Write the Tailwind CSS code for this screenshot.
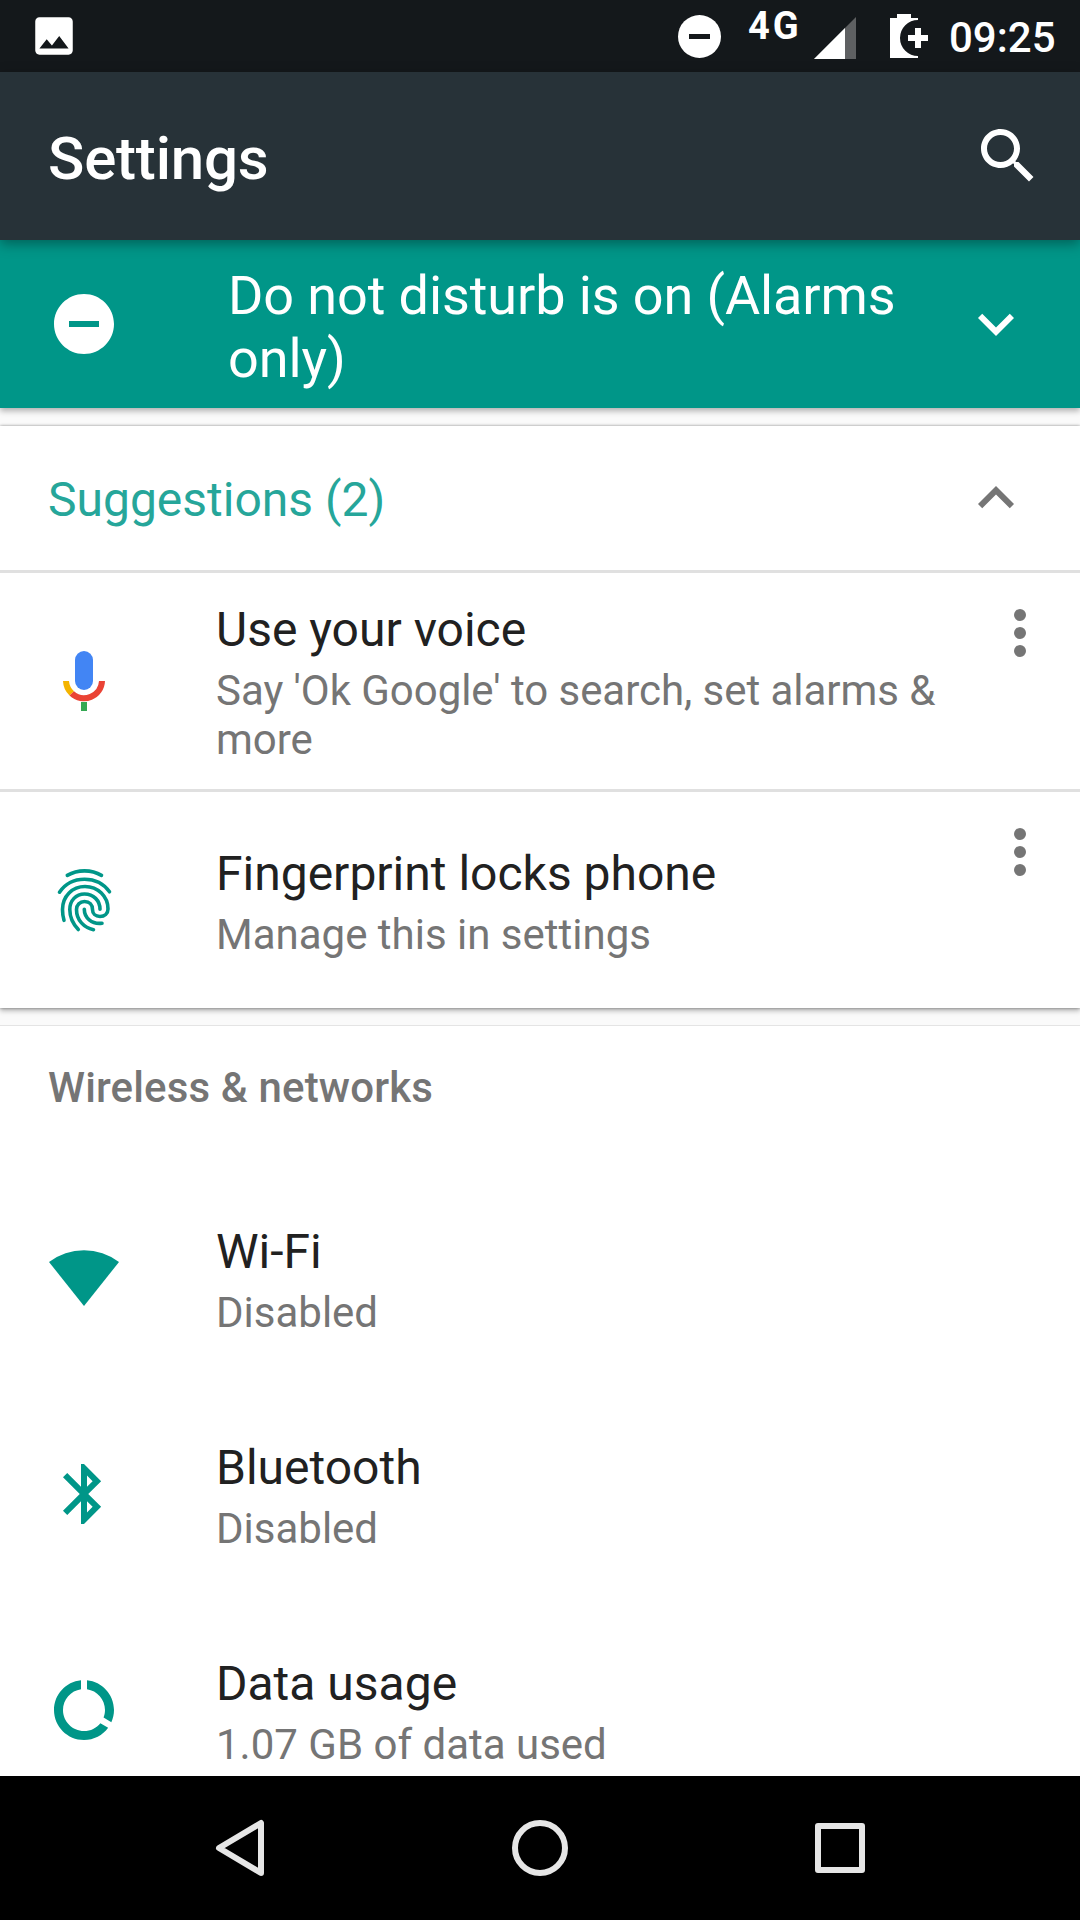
<!DOCTYPE html>
<html lang="en">
<head>
<meta charset="utf-8">
<title>Settings</title>
<script src="https://cdn.jsdelivr.net/npm/@tailwindcss/browser@4"></script>
</head>
<body class="w-[1080px] h-[1920px] overflow-hidden flex flex-col bg-[#fafafa] font-['Roboto',sans-serif]">
  <!-- Status bar -->
  <header class="h-[72px] shrink-0 bg-[#14181b] flex items-center text-white">
    <svg class="ml-[29px] w-[50px] h-[50px]" viewBox="0 0 24 24" fill="#fff"><path d="M21 19V5c0-1.1-.9-2-2-2H5c-1.1 0-2 .9-2 2v14c0 1.100.9 2 2 2h14c1.100 0 2-.9 2-2zM8.500 13.500l2.500 3.010L14.500 12l4.500 6H5l3.500-4.500z"/></svg>
    <svg class="ml-[599px] w-[43px] h-[43px] shrink-0" viewBox="0 0 43 43"><circle cx="21.500" cy="21.500" r="21.500" fill="#fff"/><rect x="11" y="19" width="21" height="5" fill="#14181b"/></svg>
    <span class="ml-[27px] w-[52px] h-[72px] pt-[4px] text-[38px] leading-[44px] font-bold tracking-[3px]">4G</span>
    <svg class="ml-[14px] w-[42px] h-[42px] mt-[4px] shrink-0" viewBox="0 0 42 42"><path d="M42 0V42H0z" fill="#5e6062"/><path d="M31 11V42H0z" fill="#fff"/></svg>
    <svg class="ml-[34px] w-[38px] h-[44px] shrink-0" viewBox="0 0 38 44" fill="#fff"><path d="M0 4H7V0H21V4H28V6A18 18 0 0 0 28 42V44H0z"/><path d="M25 14h6v7h7v6h-7v7h-6v-7h-7v-6h7z"/></svg>
    <span class="ml-[21px] pt-[2px] text-[42px] leading-[49px] font-medium">09:25</span>
  </header>
  <!-- App bar -->
  <div class="relative z-10 h-[168px] shrink-0 bg-[#273238] flex items-center justify-between pl-[48px] pr-[36px] shadow-[0_4px_12px_rgba(0,0,0,0.35)]">
    <h1 class="pt-[6px] text-white text-[60px] leading-[70px] font-medium tracking-[-0.2px]">Settings</h1>
    <svg class="w-[72px] h-[72px]" viewBox="0 0 24 24" fill="#fff"><path d="M15.500 14h-.79l-.28-.27C15.410 12.590 16 11.110 16 9.500 16 5.910 13.090 3 9.500 3S3 5.910 3 9.500 5.910 16 9.500 16c1.610 0 3.090-.59 4.230-1.570l.27.280v.79l5 4.990L20.490 19l-4.990-5zm-6 0C7.010 14 5 11.990 5 9.500S7.010 5 9.500 5 14 7.010 14 9.500 11.990 14 9.500 14z"/></svg>
  </div>
  <!-- Do not disturb -->
  <section class="relative h-[168px] shrink-0 bg-[#009688] flex items-center pl-[48px] pr-[48px] shadow-[0_3px_6px_rgba(0,0,0,0.3)]">
    <svg class="w-[72px] h-[72px] shrink-0" viewBox="0 0 24 24" fill="#fff"><path d="M12 2C6.480 2 2 6.480 2 12s4.480 10 10 10 10-4.480 10-10S17.520 2 12 2zm5 11H7v-2h10v2z"/></svg>
    <p class="ml-[108px] pt-[6px] w-[700px] text-white text-[54px] leading-[63px] tracking-[-0.1px]">Do not disturb is on (Alarms only)</p>
    <svg class="ml-auto w-[72px] h-[72px] shrink-0" viewBox="0 0 24 24" fill="#fff"><path d="M16.590 8.590L12 13.170 7.410 8.590 6 10l6 6 6-6z"/></svg>
  </section>
  <!-- Suggestions -->
  <section class="mt-[18px] shrink-0 bg-white shadow-[0_3px_5px_rgba(0,0,0,0.25),0_0_3px_rgba(0,0,0,0.4)]">
    <div class="h-[147px] border-b-[3px] border-[#e0e0e0] flex items-center justify-between px-[48px]">
      <h2 class="pt-[4px] text-[#26a69a] text-[48px] leading-[56px]">Suggestions (2)</h2>
      <svg class="w-[72px] h-[72px]" viewBox="0 0 24 24" fill="#757575"><path d="M12 8l-6 6 1.410 1.410L12 10.830l4.590 4.580L18 14z"/></svg>
    </div>
    <div class="h-[219px] border-b-[3px] border-[#e0e0e0] flex items-center pl-[48px] pr-[48px]">
      <svg class="w-[72px] h-[72px] shrink-0" viewBox="0 0 72 72"><rect x="27" y="6" width="18" height="39" rx="9" fill="#4285f4"/><path d="M15 36a21 21 0 0 0 6.500 14.500L26 46.200A15 15 0 0 1 21 36z" fill="#f4b400"/><path d="M21.500 50.500A21 21 0 0 0 57 36H51A15 15 0 0 1 26 46.200z" fill="#ea4335"/><path d="M33 57h6v9h-6z" fill="#34a853"/></svg>
      <div class="ml-[96px] w-[740px]">
        <h3 class="mb-1 text-[#212121] text-[48px] leading-[64px]">Use your voice</h3>
        <p class="text-[#757575] text-[42px] leading-[49px] tracking-[-0.05px]">Say 'Ok Google' to search, set alarms &amp; more</p>
      </div>
      <svg class="ml-auto mr-[6px] self-start mt-[36px] w-[12px] h-[48px]" viewBox="0 0 12 48" fill="#757575"><circle cx="6" cy="6" r="6"/><circle cx="6" cy="24" r="6"/><circle cx="6" cy="42" r="6"/></svg>
    </div>
    <div class="h-[216px] flex items-center pl-[48px] pr-[48px]">
      <svg class="w-[72px] h-[72px] shrink-0" viewBox="0 0 72 72" fill="none" stroke="#009688" stroke-width="3.600" stroke-linecap="round"><path d="M19.300 11.400Q27 6.900 36.500 6.900T53.500 11.400"/><path d="M11.500 28.200C17 20 26 15.200 36.500 15.200S56 20 61.500 27.800"/><path d="M16 56.300C15 53 14.500 49 14.500 45.500C14.500 32 24.500 22.500 37 22.500C50 22.500 60 32.500 60 45C60 49.500 56.500 52.500 52 52.500C47.500 52.500 44.500 49.500 44.500 45.500C44.500 41 41.500 37.500 36.500 37.500C32 37.500 28.500 41 28.500 45.500C28.500 56.500 36 63.500 45.500 65.700"/><path d="M30.300 65.500C24.500 59.500 21.800 53.500 21.800 45.500C21.800 36.500 28 30 36.500 30C45.500 30 52 36.500 52 45.300"/><path d="M36.300 45.200C36.300 53.500 43.500 60.500 54 59.200"/></svg>
      <div class="ml-[96px] w-[740px]">
        <h3 class="mb-1 text-[#212121] text-[48px] leading-[64px]">Fingerprint locks phone</h3>
        <p class="text-[#757575] text-[42px] leading-[49px]">Manage this in settings</p>
      </div>
      <svg class="ml-auto mr-[6px] self-start mt-[36px] w-[12px] h-[48px]" viewBox="0 0 12 48" fill="#757575"><circle cx="6" cy="6" r="6"/><circle cx="6" cy="24" r="6"/><circle cx="6" cy="42" r="6"/></svg>
    </div>
  </section>
  <!-- Wireless & networks -->
  <main class="mt-[17px] border-t border-[#e4e4e4] grow overflow-hidden bg-white">
    <h2 class="pt-[37px] pl-[48px] h-[144px] text-[#757575] text-[42px] leading-[49px] font-medium tracking-[0.15px]">Wireless &amp; networks</h2>
    <div class="h-[216px] flex items-center pl-[48px]">
      <svg class="w-[72px] h-[72px] shrink-0" viewBox="0 0 72 72" fill="#009688"><path d="M36 64L1 20A58 58 0 0 1 71 20z"/></svg>
      <div class="ml-[96px]"><h3 class="mb-1 text-[#212121] text-[48px] leading-[64px]">Wi-Fi</h3><p class="text-[#757575] text-[42px] leading-[49px]">Disabled</p></div>
    </div>
    <div class="h-[216px] flex items-center pl-[48px]">
      <svg class="w-[72px] h-[72px] shrink-0" viewBox="0 0 24 24" fill="#009688"><path d="M17.710 7.710L12 2h-1v7.590L6.410 5 5 6.410 10.590 12 5 17.590 6.410 19 11 14.410V22h1l5.710-5.710-4.300-4.290 4.300-4.290zM13 5.830l1.880 1.880L13 9.590V5.830zm1.880 10.460L13 18.170v-3.760l1.880 1.880z"/></svg>
      <div class="ml-[96px]"><h3 class="mb-1 text-[#212121] text-[48px] leading-[64px]">Bluetooth</h3><p class="text-[#757575] text-[42px] leading-[49px]">Disabled</p></div>
    </div>
    <div class="h-[216px] flex items-center pl-[48px]">
      <svg class="w-[72px] h-[72px] shrink-0" viewBox="0 0 24 24" fill="#009688"><path d="M13 2.050v3.030c3.390.49 6 3.390 6 6.920 0 .9-.18 1.750-.48 2.540l2.600 1.530c.56-1.240.88-2.620.88-4.070 0-5.180-3.950-9.450-9-9.950zM12 19c-3.870 0-7-3.130-7-7 0-3.530 2.610-6.430 6-6.920V2.050c-5.060.5-9 4.760-9 9.950 0 5.520 4.470 10 9.990 10 3.310 0 6.240-1.610 8.060-4.090l-2.600-1.530C16.170 17.980 14.210 19 12 19z"/></svg>
      <div class="ml-[96px]"><h3 class="mb-1 text-[#212121] text-[48px] leading-[64px]">Data usage</h3><p class="text-[#757575] text-[42px] leading-[49px]">1.07 GB of data used</p></div>
    </div>
  </main>
  <!-- Navigation bar -->
  <nav class="h-[144px] shrink-0 bg-black grid grid-cols-[240px_240px_120px_240px_240px] items-center">
    <svg class="ml-[204px] w-[72px] h-[72px]" viewBox="0 0 72 72" fill="none" stroke="#e6e6e6" stroke-width="6" stroke-linejoin="round"><path d="M57 11V61L15 36z"/></svg>
    <span></span>
    <svg class="w-[120px] h-[72px]" viewBox="0 0 120 72" fill="none" stroke="#e6e6e6" stroke-width="6"><circle cx="60" cy="36" r="25"/></svg>
    <svg class="ml-[204px] w-[72px] h-[72px]" viewBox="0 0 72 72" fill="none" stroke="#e6e6e6" stroke-width="6" stroke-linejoin="round"><rect x="14" y="14" width="44" height="44"/></svg>
    <span></span>
  </nav>
</body>
</html>
